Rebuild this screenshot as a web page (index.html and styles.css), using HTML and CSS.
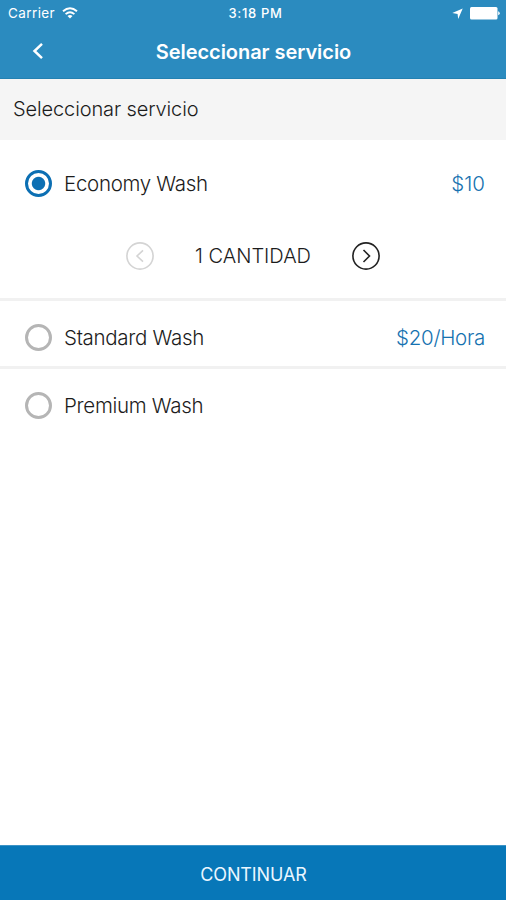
FILE: index.html
```html
<!DOCTYPE html>
<html lang="es">
<head>
<meta charset="utf-8">
<title>Seleccionar servicio</title>
<link rel="stylesheet" href="styles.css">
</head>
<body>
<div class="screen">
  <header class="header">
    <div class="status">
      <div class="carrier"><span class="carrier-name">Carrier</span>
        <svg class="wifi" width="16" height="12" viewBox="0 0 16 12" fill="none" stroke="#fff" stroke-width="1.9"><path d="M1 4.3Q8-1.9 15 4.3M3.6 7.1Q8 3.3 12.4 7.1"/><path d="M5.5 9.1Q8 7.1 10.5 9.1L8 11.6Z" fill="#fff" stroke="none"/></svg>
      </div>
      <span class="time">3:18 PM</span>
      <div class="indicators">
        <svg width="11" height="11" viewBox="0 0 11 11" fill="#fff"><path d="M10.7.4 6.2 10.9 5.6 5.9.3 5Z"/></svg>
        <svg width="30" height="13" viewBox="0 0 30 13" fill="#fff"><rect width="27.5" height="12.5" rx="1.5"/><path d="M28.2 4.2Q29.7 4.6 29.7 6.2T28.2 8.3Z"/></svg>
      </div>
    </div>
    <div class="nav">
      <svg class="back" width="12" height="18" viewBox="0 0 12 18" fill="none" stroke="#fff" stroke-width="2.5"><path d="M10 1.8 2.5 9 10 16.2"/></svg>
      <h1 class="title">Seleccionar servicio</h1>
    </div>
  </header>
  <h2 class="section">Seleccionar servicio</h2>
  <main class="list">
    <section class="service service-open">
      <div class="row"><span class="radio radio-on"></span><span class="name economy">Economy Wash</span><span class="price ten">$10</span></div>
      <div class="stepper">
        <svg class="step less" width="28" height="28" viewBox="0 0 28 28" fill="none"><circle cx="14" cy="14" r="13.1"/><path d="m17 8.3-6 5.7 6 5.7"/></svg>
        <span class="quantity">1 CANTIDAD</span>
        <svg class="step more" width="28" height="28" viewBox="0 0 28 28" fill="none"><circle cx="14" cy="14" r="13.1"/><path d="m11.5 8 6 6-6 6"/></svg>
      </div>
    </section>
    <section class="service">
      <div class="row"><span class="radio"></span><span class="name standard">Standard Wash</span><span class="price hourly">$20/Hora</span></div>
    </section>
    <section class="service service-last">
      <div class="row"><span class="radio"></span><span class="name premium">Premium Wash</span></div>
    </section>
  </main>
  <footer class="continue"><span class="continue-label">CONTINUAR</span></footer>
</div>
</body>
</html>
```
FILE: styles.css
```css
* { box-sizing: border-box; }
body { margin: 0; background: #fff; font-family: Inter, "Liberation Sans", sans-serif; color: #1c1c1c; }
svg { display: block; flex: none; }
.screen { height: 900px; display: flex; flex-direction: column; }
.header { height: 79px; background: #2b8bbf; border-bottom: 1px solid #2381b2; color: #fff; }
.status { height: 26px; display: grid; grid-template-columns: 1fr auto 1fr; align-items: center; padding: 0 6px 0 8px; font-size: 13px; line-height: 16px; }
.carrier { display: flex; gap: 7px; align-items: center; }
.carrier-name { font-size: 13.5px; letter-spacing: .4px; }
.time { font-weight: 500; letter-spacing: .65px; padding-left: 3px; }
.indicators { display: flex; justify-content: flex-end; align-items: center; gap: 7px; }
.nav { height: 52px; display: grid; grid-template-columns: 46px 1fr 46px; align-items: center; }
.back { margin: -3px 0 0 32px; }
.title { margin: 0; padding-left: 1px; text-align: center; font-size: 20px; font-weight: 600; letter-spacing: -.05px; line-height: 24px; white-space: nowrap; }
.section { height: 61px; margin: 0; padding: 0 13px; background: #f5f5f5; font-size: 20px; font-weight: 350; letter-spacing: -.12px; line-height: 61px; }
.list { flex: 1; }
.service { height: 68px; border-bottom: 3px solid #f1f1f1; padding: 3px 21px 0 25px; }
.service-open { height: 161px; padding-top: 10px; }
.service-last { border: 0; padding-top: 3px; }
.row { height: 66px; display: flex; align-items: center; font-size: 20.5px; font-weight: 350; line-height: 26px; }
.radio { width: 27px; height: 27px; flex: none; border: 3px solid #b5b5b5; border-radius: 50%; margin-right: 12px; }
.radio-on { border-color: #0c6fb3; background: radial-gradient(circle, #0c6fb3 6.2px, transparent 7.2px); }
.name { padding-top: 1px; letter-spacing: -.3px; }
.price { margin-left: auto; padding-top: 1px; color: #1672b0; letter-spacing: -.3px; }
.ten { letter-spacing: 0; }
.stepper { height: 80px; display: flex; align-items: center; justify-content: center; font-size: 20px; font-weight: 350; margin-right: 4px; }
.quantity { width: 118px; margin: 0 40px; text-align: center; white-space: nowrap; }
.step { stroke-width: 1.6; }
.less { stroke: #d4d4d4; }
.more { stroke: #222; }
.continue { height: 55px; padding: 2px 0 0 1px; background: #0777b8; border-top: 1px solid #3c93c6; color: #eaf6ff; display: flex; align-items: center; justify-content: center; font-size: 18px; letter-spacing: -.1px; }
```
